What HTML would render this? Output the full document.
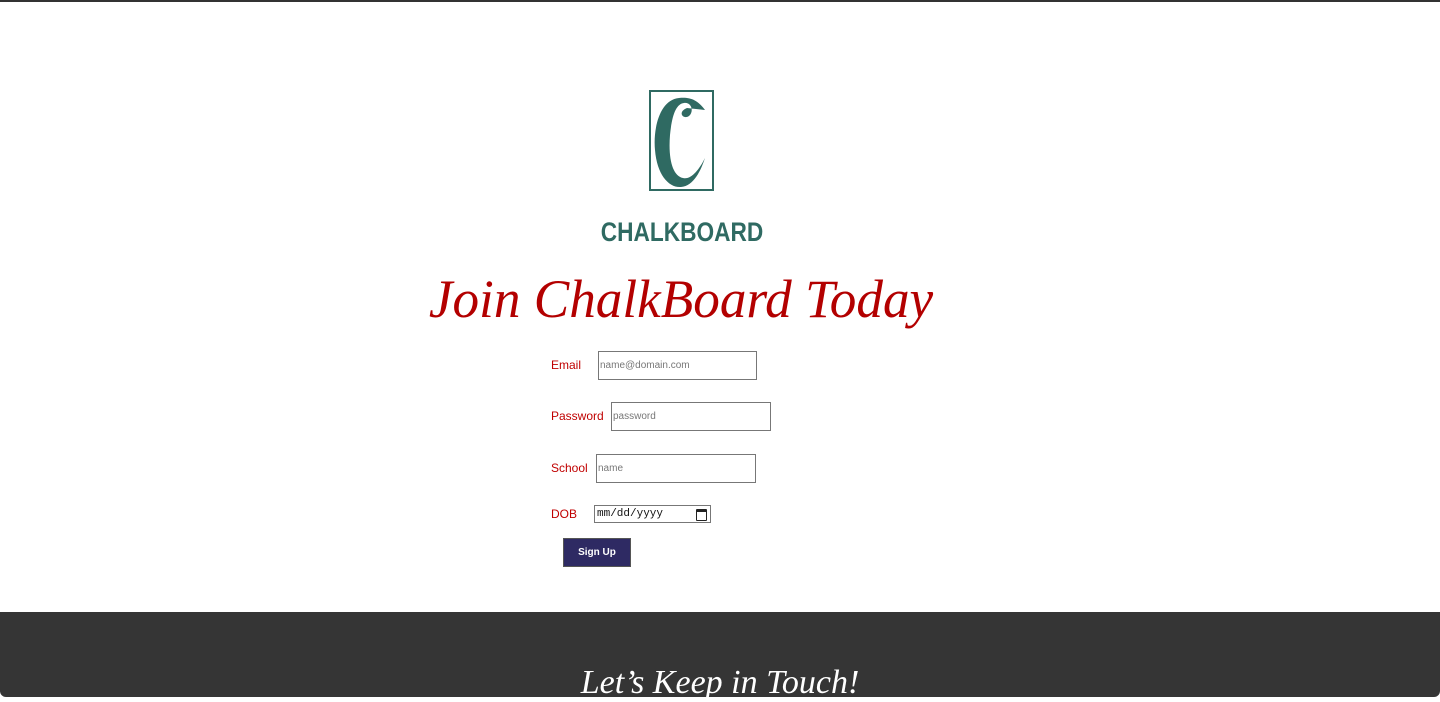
<!DOCTYPE html>
<html><head><style>
body{margin:0;width:1440px;height:697px;overflow:hidden;background:#fff;font-family:"Liberation Sans",sans-serif;position:relative}
.top{position:absolute;left:0;top:0;width:1440px;height:2px;background:#333}
.abs{position:absolute}
.lbl{position:absolute;color:#c00000;font-size:12px}
.inp{position:absolute;border:1px solid #777;box-sizing:border-box;font-size:10px;color:#777;padding:9px 1px 0;line-height:10px}
</style></head><body>
<div class="top"></div>
<svg class="abs" style="left:649px;top:90px" width="66" height="102" viewBox="0 0 66 102">
<rect x="1" y="1" width="63" height="99" fill="none" stroke="#2f6a62" stroke-width="2"/>
<path d="M30 8 C10 10 4 40 6 60 C8 85 20 98 32 97 C45 96 52 80 56 68 C50 80 42 90 34 88 C24 86 19 70 21 45 C23 25 27 14 35 13 C43 12 45 22 40 26 C34 30 28 22 38 18 L56 20 C48 9 40 7 30 8Z" fill="#2f6a62"/>
</svg>
<div class="abs" style="left:482px;top:217px;width:400px;text-align:center;color:#2f6a62;font:bold 27px 'Liberation Sans',sans-serif;transform:scaleX(0.84);transform-origin:center">CHALKBOARD</div>
<div class="abs" style="left:381px;top:268px;width:600px;text-align:center;color:#b30000;font:italic 54px 'Liberation Serif',serif;transform:scaleX(0.985);transform-origin:center">Join ChalkBoard Today</div>
<div class="lbl" style="left:551px;top:358px">Email</div>
<div class="inp" style="left:598px;top:351px;width:159px;height:29px">name@domain.com</div>
<div class="lbl" style="left:551px;top:409px">Password</div>
<div class="inp" style="left:611px;top:402px;width:160px;height:29px">password</div>
<div class="lbl" style="left:551px;top:461px">School</div>
<div class="inp" style="left:596px;top:454px;width:160px;height:29px">name</div>
<div class="lbl" style="left:551px;top:507px">DOB</div>
<div class="abs" style="left:594px;top:505px;width:117px;height:18px;box-sizing:border-box;border:1px solid #777;font:11px 'Liberation Mono',monospace;color:#111;padding:2px 0 0 2px">mm/dd/yyyy<span style="position:absolute;right:3px;top:3px;width:9px;height:8px;border:1.5px solid #222;border-top-width:3px;border-radius:1px"></span></div>
<div class="abs" style="left:563px;top:538px;width:68px;height:29px;background:#2e2a63;border:1px solid #555;box-sizing:border-box;color:#fff;font-size:10px;font-weight:bold;text-align:center;line-height:28px">Sign Up</div>
<div class="abs" style="left:0;top:612px;width:1440px;height:85px;background:#353535;border-radius:0 0 6px 6px"></div>
<div class="abs" style="left:0;top:664px;width:1440px;text-align:center;color:#fff;font:italic 34px 'Liberation Serif',serif">Let’s Keep in Touch!</div>
</body></html>
